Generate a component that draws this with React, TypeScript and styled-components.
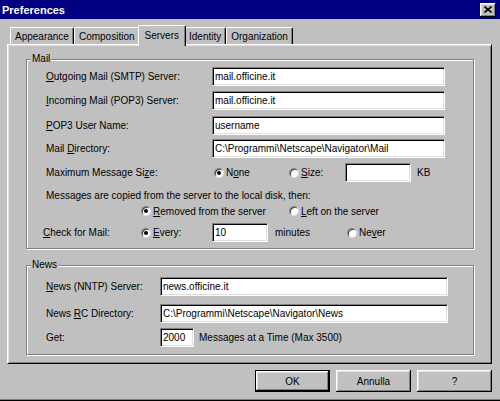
import React from "react";
import styled, { createGlobalStyle } from "styled-components";

const Global = createGlobalStyle`
  html, body { margin: 0; padding: 0; background: #c0c0c0; }
  body {
    font-family: "Liberation Sans", Arial, sans-serif;
    font-size: 10px;
    color: #000;
  }
  * { box-sizing: border-box; }
`;

const Window = styled.div`
  width: 500px;
  height: 401px;
  background: #c0c0c0;
  display: flex;
  flex-direction: column;
  overflow: hidden;
  box-shadow: inset 0 -1px #000, inset 0 -2px #808080;
`;

const TitleBar = styled.div`
  height: 19px;
  flex: none;
  background: #000080;
  color: #fff;
  display: flex;
  align-items: center;
  justify-content: space-between;
  padding: 0 4px 0 2px;
  font-weight: bold;
  font-size: 11px;
`;

const CloseButton = styled.div`
  width: 16px;
  height: 14px;
  background: #c0c0c0;
  display: flex;
  align-items: center;
  justify-content: center;
  box-shadow: inset -1px -1px #000, inset 1px 1px #fff, inset -2px -2px #808080,
    inset 2px 2px #dfdfdf;
`;

const Body = styled.div`
  flex: 1;
  display: flex;
  flex-direction: column;
  padding: 0 8px 0 7px;
`;

const TabRow = styled.div`
  display: flex;
  align-items: flex-end;
  height: 19px;
  margin-top: 6px;
  padding-left: 3px;
`;

const Tab = styled.div<{ $active?: boolean }>`
  position: relative;
  z-index: ${(p) => (p.$active ? 2 : 1)};
  height: ${(p) => (p.$active ? 21 : 17)}px;
  margin: ${(p) => (p.$active ? "0 -2px -2px -2px" : "0")};
  padding: ${(p) => (p.$active ? "0 6px 2px" : "0 4px")};
  display: flex;
  align-items: center;
  background: #c0c0c0;
  border-left: 1px solid #fff;
  border-top: 1px solid #fff;
  border-right: 1px solid #000;
  border-radius: 2px 2px 0 0;
  box-shadow: inset -1px 0 #808080;
  white-space: nowrap;
`;

const Panel = styled.div`
  border: 1px solid;
  border-color: #fff #000 #000 #fff;
  box-shadow: inset 1px 1px #dfdfdf, inset -1px -1px #808080;
  padding: 8px 17px 8px 18px;
  display: flex;
  flex-direction: column;
`;

const GroupBox = styled.fieldset<{ $mt?: number }>`
  margin: ${(p) => p.$mt ?? 0}px 0 0 0;
  padding: 0;
  min-inline-size: 0;
  border: 1px solid #808080;
  box-shadow: inset 1px 1px #fff, 1px 1px #fff;
`;

const Legend = styled.legend`
  margin-left: 4px;
  padding: 0 1px;
  line-height: 12px;
  height: 12px;
  background: #c0c0c0;
`;

const GroupContent = styled.div<{ $pb?: number }>`
  padding: 0 0 ${(p) => p.$pb ?? 0}px 19px;
  display: flex;
  flex-direction: column;
`;

const Row = styled.div<{ $h: number }>`
  display: flex;
  align-items: center;
  height: ${(p) => p.$h}px;
  white-space: nowrap;
`;

const Cell = styled.div<{ $w?: number; $ml?: number }>`
  flex: none;
  display: flex;
  align-items: center;
  ${(p) => (p.$w !== undefined ? `width: ${p.$w}px;` : "")}
  ${(p) => (p.$ml !== undefined ? `margin-left: ${p.$ml}px;` : "")}
`;

const TextBox = styled.input<{ $w: number }>`
  flex: none;
  width: ${(p) => p.$w}px;
  height: 19px;
  margin: 0;
  padding: 0 2px;
  background: #fff;
  font: inherit;
  color: #000;
  border: 1px solid;
  border-color: #808080 #fff #fff #808080;
  box-shadow: inset 1px 1px #000, inset -1px -1px #dfdfdf;
  outline: none;
`;

const RadioOption = styled.label`
  display: flex;
  align-items: center;
  gap: 2px;
`;

const RadioCircle = styled.span<{ $checked?: boolean }>`
  flex: none;
  width: 10px;
  height: 10px;
  border-radius: 50%;
  background: #fff;
  border: 1px solid;
  border-color: #808080 #dfdfdf #dfdfdf #808080;
  box-shadow: inset 1px 1px #404040;
  display: flex;
  align-items: center;
  justify-content: center;
  &::after {
    content: "";
    width: 4px;
    height: 4px;
    border-radius: 50%;
    background: ${(p) => (p.$checked ? "#000" : "transparent")};
  }
`;

const U = styled.span`
  text-decoration: underline;
  text-underline-offset: 1px;
`;

const ButtonRow = styled.div`
  display: flex;
  justify-content: flex-end;
  gap: 6px;
  margin-top: 6px;
`;

const Button = styled.div<{ $default?: boolean }>`
  width: 75px;
  height: 22px;
  display: flex;
  align-items: center;
  justify-content: center;
  background: #c0c0c0;
  border: ${(p) => (p.$default ? "1px solid #000" : "none")};
  box-shadow: inset -1px -1px #000, inset 1px 1px #fff, inset -2px -2px #808080,
    inset 2px 2px #dfdfdf;
`;

const Radio = ({
  checked,
  children,
}: {
  checked?: boolean;
  children: React.ReactNode;
}) => (
  <RadioOption>
    <RadioCircle $checked={checked} />
    <span>{children}</span>
  </RadioOption>
);

export default function App() {
  return (
    <>
      <Global />
      <Window>
        <TitleBar>
          <span>Preferences</span>
          <CloseButton>
            <svg width="8" height="7" viewBox="0 0 8 7">
              <path d="M0.5 0.5 L7.5 6.5 M7.5 0.5 L0.5 6.5" stroke="#000" strokeWidth="1.6" />
            </svg>
          </CloseButton>
        </TitleBar>
        <Body>
          <TabRow>
            <Tab>Appearance</Tab>
            <Tab>Composition</Tab>
            <Tab $active>Servers</Tab>
            <Tab>Identity</Tab>
            <Tab>Organization</Tab>
          </TabRow>
          <Panel>
            <GroupBox>
              <Legend>Mail</Legend>
              <GroupContent>
                <Row $h={23}>
                  <Cell $w={166}>
                    <span>
                      <U>O</U>utgoing Mail (SMTP) Server:
                    </span>
                  </Cell>
                  <TextBox $w={233} readOnly value="mail.officine.it" />
                </Row>
                <Row $h={24}>
                  <Cell $w={166}>
                    <span>
                      <U>I</U>ncoming Mail (POP3) Server:
                    </span>
                  </Cell>
                  <TextBox $w={233} readOnly value="mail.officine.it" />
                </Row>
                <Row $h={26}>
                  <Cell $w={166}>
                    <span>
                      <U>P</U>OP3 User Name:
                    </span>
                  </Cell>
                  <TextBox $w={233} readOnly value="username" />
                </Row>
                <Row $h={21}>
                  <Cell $w={166}>
                    <span>
                      Mail <U>D</U>irectory:
                    </span>
                  </Cell>
                  <TextBox
                    $w={233}
                    readOnly
                    value="C:\Programmi\Netscape\Navigator\Mail"
                  />
                </Row>
                <Row $h={27}>
                  <Cell $w={168}>
                    <span>
                      Maximum Message Si<U>z</U>e:
                    </span>
                  </Cell>
                  <Cell $w={75}>
                    <Radio checked>
                      N<U>o</U>ne
                    </Radio>
                  </Cell>
                  <Cell $w={56}>
                    <Radio>
                      <U>S</U>ize:
                    </Radio>
                  </Cell>
                  <TextBox $w={66} readOnly value="" />
                  <Cell $ml={6}>KB</Cell>
                </Row>
                <Row $h={19}>
                  <span>Messages are copied from the server to the local disk, then:</span>
                </Row>
                <Row $h={12}>
                  <Cell $w={148} $ml={95}>
                    <Radio checked>
                      <U>R</U>emoved from the server
                    </Radio>
                  </Cell>
                  <Radio>
                    <U>L</U>eft on the server
                  </Radio>
                </Row>
                <Row $h={31}>
                  <Cell $w={98} $ml={-3}>
                    <span>
                      <U>C</U>heck for Mail:
                    </span>
                  </Cell>
                  <Cell $w={71}>
                    <Radio checked>
                      <U>E</U>very:
                    </Radio>
                  </Cell>
                  <TextBox $w={56} readOnly value="10" />
                  <Cell $w={72} $ml={7}>
                    minutes
                  </Cell>
                  <Radio>
                    Ne<U>v</U>er
                  </Radio>
                </Row>
              </GroupContent>
            </GroupBox>
            <GroupBox $mt={10}>
              <Legend>News</Legend>
              <GroupContent $pb={4}>
                <Row $h={31}>
                  <Cell $w={114}>
                    <span>
                      <U>N</U>ews (NNTP) Server:
                    </span>
                  </Cell>
                  <TextBox $w={288} readOnly value="news.officine.it" />
                </Row>
                <Row $h={23}>
                  <Cell $w={114}>
                    <span>
                      News <U>R</U>C Directory:
                    </span>
                  </Cell>
                  <TextBox
                    $w={288}
                    readOnly
                    value="C:\Programmi\Netscape\Navigator\News"
                  />
                </Row>
                <Row $h={25}>
                  <Cell $w={114}>
                    <span>Get:</span>
                  </Cell>
                  <TextBox $w={34} readOnly value="2000" />
                  <Cell $ml={5}>Messages at a Time (Max 3500)</Cell>
                </Row>
              </GroupContent>
            </GroupBox>
          </Panel>
          <ButtonRow>
            <Button $default>OK</Button>
            <Button>Annulla</Button>
            <Button>?</Button>
          </ButtonRow>
        </Body>
      </Window>
    </>
  );
}
